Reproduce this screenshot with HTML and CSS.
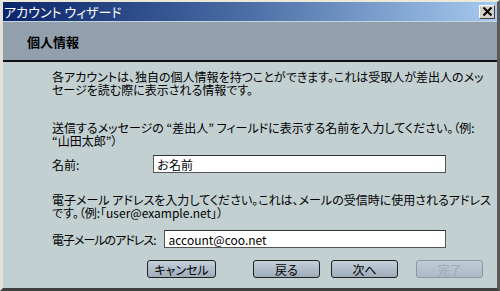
FILE: index.html
```html
<!DOCTYPE html>
<html>
  <head>
    <meta charset="utf-8">
    <title>アカウント ウィザード</title>
    <link rel="stylesheet" href="styles.css">
  </head>
  <body>
    <div class="window">
      <div class="titlebar">
        <span class="title">アカウント ウィザード</span>
        <span class="close">
          <svg width="11" height="9" viewBox="0 0 11 9">
            <path d="M1.5 0.5 L9.5 8.5 M9.5 0.5 L1.5 8.5" stroke="#000" stroke-width="2" fill="none" />
          </svg>
        </span>
      </div>
      <div class="header">
        <h2>個人情報</h2>
      </div>
      <div class="content">
        <p class="p1">各アカウントは、独自の個人情報を持つことができます。これは受取人が差出人のメッ<br>セージを読む際に表示される情報です。</p>
        <p class="p2">送信するメッセージの “差出人” フィールドに表示する名前を入力してください。（例:<br>“山田太郎”）</p>
        <div class="field name-field">
          <label class="name-label" for="name">名前:</label>
          <input type="text" id="name" value="お名前">
        </div>
        <p class="p3">電子メール アドレスを入力してください。これは、メールの受信時に使用されるアドレス<br>です。（例:「user@example.net」）</p>
        <div class="field mail-field">
          <label class="mail-label" for="mail">電子メールのアドレス:</label>
          <input type="text" id="mail" value="account@coo.net">
        </div>
        <div class="buttons">
          <button class="btn cancel">キャンセル</button>
          <button class="btn back">戻る</button>
          <button class="btn next">次へ</button>
          <button class="btn finish" disabled>完了</button>
        </div>
      </div>
    </div>
  </body>
</html>
```
FILE: styles.css
```css
html, body {
  margin: 0;
  padding: 0;
}
body {
  font-family: "Noto Sans CJK JP", "Liberation Sans", sans-serif;
  font-size: 12px;
  font-feature-settings: "palt";
  color: #000;
  background-color: #c3d0d2;
}
.window {
  width: 500px;
  height: 291px;
  box-sizing: border-box;
  border-top: 2px solid #ece9d8;
  border-left: 3px solid #e4e2d8;
  border-right: 3px solid #5a5a5a;
  border-bottom: 3px solid #404040;
  background-color: #c3d0d2;
  display: flex;
  flex-direction: column;
}
.titlebar {
  height: 19px;
  background: linear-gradient(to right, #0a246a, #4c6fa6 50%, #a6caf0);
  border-bottom: 1px solid #c8d4dc;
  display: flex;
  align-items: center;
  justify-content: space-between;
  padding: 0 2px 0 1px;
}
.title {
  color: #fff;
  font-size: 13px;
  line-height: 19px;
}
.close {
  width: 16px;
  height: 14px;
  box-sizing: border-box;
  background-color: #d4d0c8;
  border: 1px solid;
  border-color: #fff #404040 #404040 #fff;
  display: flex;
  align-items: center;
  justify-content: center;
}
.header {
  height: 38px;
  background-color: #929fac;
  border-bottom: 2px solid #111;
  display: flex;
  align-items: center;
  padding-left: 24px;
}
h2 {
  margin: 0;
  font-size: 13px;
  font-weight: bold;
}
.content {
  padding: 8px 0 0 49px;
}
p {
  margin: 0;
  line-height: 13px;
}
.p2 {
  margin-top: 25px;
}
.p3 {
  margin-top: 20px;
}
.field {
  display: flex;
  align-items: center;
  margin-right: 51px;
}
.field label {
  flex: none;
  white-space: nowrap;
}
.name-field {
  margin-top: 8px;
}
.mail-field {
  margin-top: 11px;
}
.name-label {
  width: 101px;
}
.mail-label {
  letter-spacing: -1px;
  margin-right: 9px;
}
input[type="text"] {
  flex: 1;
  min-width: 0;
  height: 18px;
  box-sizing: border-box;
  border: 1px solid #555;
  border-top-color: #333;
  background-color: #fff;
  font-family: inherit;
  font-size: 12px;
  padding: 0 3px;
  margin: 0;
  outline: none;
}
.buttons {
  display: flex;
  margin-top: 12px;
  padding-left: 95px;
}
.btn {
  height: 18px;
  width: 67px;
  box-sizing: border-box;
  border: 1px solid #222;
  border-radius: 3px;
  background: linear-gradient(#c4d0dc, #9eabb9);
  font-family: inherit;
  font-size: 12px;
  font-feature-settings: "palt";
  line-height: 15px;
  padding: 0;
  color: #000;
}
.cancel {
  width: 69px;
}
.back {
  margin-left: 37px;
}
.next {
  margin-left: 11px;
}
.finish {
  margin-left: 18px;
  border-color: #8c98a4;
  color: #9aa8b4;
  background: linear-gradient(#c0ccd6, #adbac6);
}
```
